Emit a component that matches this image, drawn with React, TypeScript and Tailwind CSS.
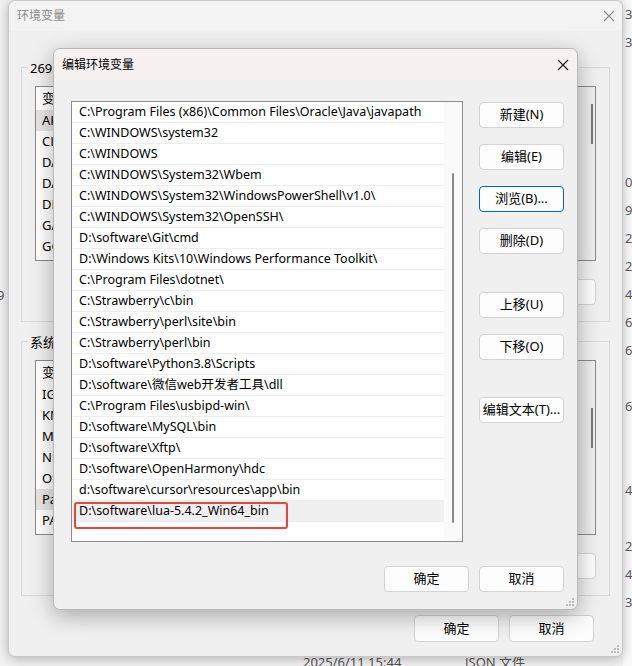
import React from "react";

const font = { fontFamily: '"Noto Sans", "Noto Sans CJK SC", sans-serif' };

const paths = [
  "C:\\Program Files (x86)\\Common Files\\Oracle\\Java\\javapath",
  "C:\\WINDOWS\\system32",
  "C:\\WINDOWS",
  "C:\\WINDOWS\\System32\\Wbem",
  "C:\\WINDOWS\\System32\\WindowsPowerShell\\v1.0\\",
  "C:\\WINDOWS\\System32\\OpenSSH\\",
  "D:\\software\\Git\\cmd",
  "D:\\Windows Kits\\10\\Windows Performance Toolkit\\",
  "C:\\Program Files\\dotnet\\",
  "C:\\Strawberry\\c\\bin",
  "C:\\Strawberry\\perl\\site\\bin",
  "C:\\Strawberry\\perl\\bin",
  "D:\\software\\Python3.8\\Scripts",
  "D:\\software\\微信web开发者工具\\dll",
  "C:\\Program Files\\usbipd-win\\",
  "D:\\software\\MySQL\\bin",
  "D:\\software\\Xftp\\",
  "D:\\software\\OpenHarmony\\hdc",
  "d:\\software\\cursor\\resources\\app\\bin",
  "D:\\software\\lua-5.4.2_Win64_bin",
];

// file list peeking out on the right, one row every 28px
const rightCol = ["3,", "3,", "", "", "", "", "0,", "9,", "2,", "2,", "4,", "6,", "6,", "", "6,", "", "", "4,", "", "2,", "4,", "3,"];

const userVars = ["AP", "CL", "DA", "DA", "DE", "GA", "GC"];
const sysVars = ["IG", "KN", "M", "NU", "OS", "Pa", "PA"];

const CloseX = ({ color }: { color: string }) => (
  <svg width="12" height="12" viewBox="0 0 12 12">
    <path d="M1 1 L11 11 M11 1 L1 11" stroke={color} strokeWidth="1.1" />
  </svg>
);

const Grip = () => (
  <svg width="10" height="10" viewBox="0 0 10 10">
    {[
      [8, 2],
      [8, 5],
      [5, 5],
      [8, 8],
      [5, 8],
      [2, 8],
    ].map(([x, y], i) => (
      <rect key={i} x={x - 1} y={y - 1} width="2" height="2" fill="#bdbdbd" />
    ))}
  </svg>
);

const Btn = ({ label, focus, className = "" }: { label: string; focus?: boolean; className?: string }) => (
  <div
    className={`flex h-[26px] w-[85px] items-center justify-center rounded-[4px] border bg-[#fdfdfd] text-[13px] text-black ${
      focus ? "border-[#0067c0]" : "border-[#d3d3d3]"
    } ${className}`}
  >
    {label}
  </div>
);

const VarList = ({ rows, selected }: { rows: string[]; selected: number }) => (
  <div className="relative mx-[13px] mt-[18px] h-[175px] border border-[#8a8a8a] bg-white">
    <div className="flex h-[23px] items-center pl-[6px] text-[13px]">变量</div>
    {rows.map((r, i) => (
      <div
        key={i}
        className={`flex h-[21px] items-center pl-[6px] text-[13px] ${i === selected ? "bg-[#e6e6e6]" : ""}`}
      >
        {r}
      </div>
    ))}
    <div className="absolute right-0 top-0 h-full w-[21px] bg-gradient-to-r from-[#e2e2e2] to-[#f0f0f0]" />
  </div>
);

const GroupBox = ({ label, rows, selected, thumbTop }: { label: string; rows: string[]; selected: number; thumbTop: number }) => (
  <div className="relative mx-[12px] h-[255px] border border-[#dadada]">
    <div className="absolute -top-[10px] left-[6px] bg-[#f0f0f0] px-[2px] text-[13px] leading-[20px]">{label}</div>
    <VarList rows={rows} selected={selected} />
    <div
      className="absolute left-[569px] w-[2px] bg-[#7a7a7a]"
      style={{ top: thumbTop, height: 40 }}
    />
    <div className="mr-[13px] mt-[18px] flex justify-end gap-[10px]">
      <Btn label="新建" />
      <Btn label="编辑" />
      <Btn label="删除" />
    </div>
  </div>
);

export default function App() {
  return (
    <div className="relative h-[666px] w-[632px] overflow-hidden bg-[#f3f3f3] text-black" style={font}>
      {/* desktop behind */}
      <div className="absolute left-[623px] top-0 h-full w-[20px] bg-[#fbfbfb] pl-[2px] pt-[4px]">
        {rightCol.map((t, i) => (
          <div key={i} className="h-[28px] text-[13px] leading-[20px] text-[#5c5c5c]">
            {t}
          </div>
        ))}
      </div>
      <div className="absolute -left-[3px] top-[286px] text-[13px] text-[#555]">9</div>
      <div className="absolute left-[303px] top-[652px] flex text-[13px] leading-[20px] text-[#555]">
        <span className="w-[162px]">2025/6/11 15:44</span>
        <span>JSON 文件</span>
      </div>

      {/* 环境变量 window */}
      <div className="absolute left-[8px] top-0 h-[657px] w-[615px] rounded-[7px] border border-[#c8c8c8] bg-[#f0f0f0] shadow-[0_2px_12px_rgba(0,0,0,0.28)]">
        <div className="flex h-[30px] items-center justify-between rounded-t-[7px] bg-[#f3f3f3] pl-[8px] pr-[7px] text-[12px] text-[#8a8a8a]">
          <span>环境变量</span>
          <CloseX color="#8a8a8a" />
        </div>
        <div className="mt-[36px]">
          <GroupBox label="2695" rows={userVars} selected={0} thumbTop={36} />
        </div>
        <div className="mt-[19px]">
          <GroupBox label="系统变量" rows={sysVars} selected={5} thumbTop={66} />
        </div>
        <div className="mr-[28px] mt-[19px] flex justify-end gap-[10px]">
          <Btn label="确定" className="h-[27px] bg-[#f4f4f4]" />
          <Btn label="取消" className="h-[27px] bg-[#f4f4f4]" />
        </div>
        <div className="absolute bottom-[2px] right-[2px]">
          <Grip />
        </div>
      </div>

      {/* 编辑环境变量 dialog */}
      <div className="absolute left-[53px] top-[48px] flex h-[562px] w-[525px] flex-col rounded-[7px] border border-[#b9b9b9] bg-[#f0f0f0] shadow-[0_6px_22px_rgba(0,0,0,0.3)]">
        <div className="flex h-[31px] items-center justify-between rounded-t-[7px] bg-[#f7f0f1] pl-[8px] pr-[8px] text-[12px]">
          <span>编辑环境变量</span>
          <CloseX color="#1a1a1a" />
        </div>
        <div className="flex gap-[16px] pl-[17px] pt-[21px]">
          <div className="relative h-[441px] w-[392px] border border-[#8c8c8c] bg-white">
            {paths.map((p, i) => (
              <div
                key={i}
                className={`relative flex h-[21px] w-[372px] items-center border-b border-[#ededed] pl-[7px] pt-[1px] text-[12.5px] ${
                  i === paths.length - 1 ? "bg-[#f0f0f0]" : ""
                }`}
              >
                {p}
                {i === paths.length - 1 && (
                  <div className="absolute left-[2px] top-[1px] h-[27px] w-[214px] rounded-[3px] border-2 border-[#e5473d]" />
                )}
              </div>
            ))}
            <div className="absolute right-0 top-0 h-full w-[18px] bg-[#fafafa]">
              <div className="ml-[8px] mt-[71px] h-[350px] w-[2px] rounded-full bg-[#8a8a8a]" />
            </div>
          </div>
          <div className="flex flex-col pt-[1px]">
            <Btn label="新建(N)" />
            <Btn label="编辑(E)" className="mt-[16px]" />
            <Btn label="浏览(B)..." focus className="mt-[16px]" />
            <Btn label="删除(D)" className="mt-[16px]" />
            <Btn label="上移(U)" className="mt-[38px]" />
            <Btn label="下移(O)" className="mt-[16px]" />
            <Btn label="编辑文本(T)..." className="mt-[37px]" />
          </div>
        </div>
        <div className="mt-[24px] flex justify-end gap-[10px] pr-[13px]">
          <Btn label="确定" />
          <Btn label="取消" />
        </div>
        <div className="absolute bottom-[2px] right-[2px]">
          <Grip />
        </div>
      </div>
    </div>
  );
}
